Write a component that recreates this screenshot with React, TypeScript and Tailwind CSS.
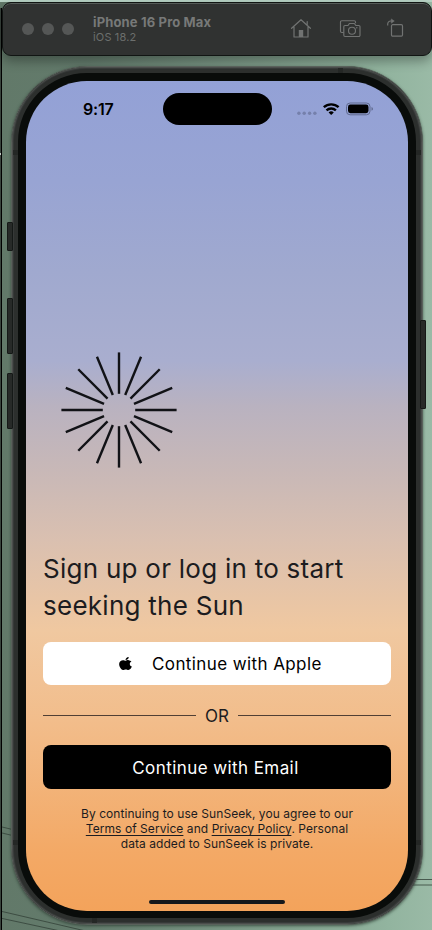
import React from "react";

const rays = Array.from({ length: 16 }, (_, i) => i * 22.5);

function SideButton({ className }: { className: string }) {
  return <span className={`absolute w-[6px] rounded-[1px] border border-[#151917] bg-[#272a28] ${className}`} />;
}

function TitleBar() {
  return (
    <header className="relative ml-[2px] flex h-[54px] w-[430px] items-center rounded-[9px] border border-[#111513] bg-[#303231] shadow-[inset_0_1px_0_#555b58,0_5px_12px_#0005]">
      <div className="ml-[19px] flex gap-[8px]">
        <i className="size-[12px] rounded-full bg-[#555756]" />
        <i className="size-[12px] rounded-full bg-[#555756]" />
        <i className="size-[12px] rounded-full bg-[#555756]" />
      </div>
      <div className="ml-[19px] w-[160px] whitespace-nowrap text-[#777978]">
        <div className="text-[13px] font-bold leading-[15px] tracking-[0.150px]">iPhone 16 Pro Max</div>
        <div className="text-[11px] leading-[14px] tracking-[0.150px] text-[#6c6f6d]">iOS 18.2</div>
      </div>
      <div className="ml-[37px] flex items-center text-[#717372]">
        <svg width="22" height="22" viewBox="0 0 22 22" fill="none" stroke="currentColor" strokeWidth="1.2" strokeLinecap="round" strokeLinejoin="round">
          <path d="M1.600 10.300 11 1.700l9.400 8.600M4 9v10h14V9M17.200 7V3.500" />
          <path d="M8.800 12h4.400v7H8.800z" fill="currentColor" stroke="none" />
        </svg>
        <svg className="ml-[27px]" width="22" height="22" viewBox="0 0 22 22" fill="none" stroke="currentColor" strokeWidth="1.150" strokeLinejoin="round">
          <path d="M4.800 14.500H2.700a1.200 1.200 0 0 1-1.200-1.200V3.900A1.200 1.200 0 0 1 2.700 2.700h12.600a1.200 1.200 0 0 1 1.200 1.200v1.300" />
          <path d="M6 7.500h3l1.400-2h5l1.400 2h3a1.200 1.200 0 0 1 1.200 1.200v8.600a1.200 1.200 0 0 1-1.200 1.200H6a1.200 1.200 0 0 1-1.200-1.200V8.700A1.200 1.200 0 0 1 6 7.500Z" />
          <circle cx="13" cy="12.700" r="3.500" />
          <circle cx="17.800" cy="9.800" r=".7" fill="currentColor" stroke="none" />
        </svg>
        <svg className="ml-[24px]" width="22" height="22" viewBox="0 0 22 22" fill="none" stroke="currentColor" strokeWidth="1.200" strokeLinejoin="round">
          <rect x="6.500" y="6.700" width="11" height="11.500" rx="1.200" />
          <path d="M2.700 7.500V6a3 3 0 0 1 3-3h2.600" />
          <path d="M6.300.9 9.300 3 6.300 5.200Z" fill="currentColor" strokeWidth=".5" />
        </svg>
      </div>
    </header>
  );
}

function StatusBar() {
  return (
    <div className="flex h-[32px] items-center text-black">
      <span className="ml-[57px] w-[79.500px] text-[16px] font-semibold leading-5 tracking-[-0.200px]">9:17</span>
      <span className="h-[32px] w-[109px] rounded-full bg-black" />
      <svg className="ml-[25px]" width="78" height="20" viewBox="0 0 78 20">
        <g fill="#7580ab">
          <circle cx="1.900" cy="14.200" r="1.700" />
          <circle cx="7.200" cy="14.200" r="1.700" />
          <circle cx="12.600" cy="14.200" r="1.700" />
          <circle cx="17.900" cy="14.200" r="1.700" />
        </g>
        <g fill="none" stroke="#000" strokeWidth="2.400">
          <path d="M26.800 8.200a11 11 0 0 1 14.800 0" />
          <path d="M29.500 11.300a7 7 0 0 1 9.400 0" />
        </g>
        <path d="m34.200 16-2.600-2.500a3.800 3.800 0 0 1 5.200 0Z" />
        <rect x="49.500" y="4" width="23.500" height="11.800" rx="3.600" fill="none" stroke="#5f698e" />
        <rect x="51" y="5.600" width="20.500" height="8.600" rx="2.400" />
        <path d="M74.500 8c2 .6 2 3.200 0 3.800Z" fill="#5f698e" />
      </svg>
    </div>
  );
}

export default function App() {
  return (
    <div className="relative h-[930px] w-[432px] overflow-hidden bg-[linear-gradient(90deg,#627969_0%,#637b6c_20%,#92b49f_90%,#9abaa6_100%)] pt-[2px] font-['Inter',sans-serif]">
      <span className="absolute left-0 top-0 h-[2px] w-full bg-[#b8d3c5]" />
      <svg className="absolute inset-0" width="432" height="930" fill="none" stroke="#344139" strokeWidth=".8">
        <path d="M0 826.500 27 833M0 832.500 27 839M0 911 90 932M0 918 65 932M405 879.500h27M405 885h27" />
      </svg>
      <span className="absolute left-0 top-[8px] h-full w-[2px] border-r border-black bg-[#39443d]" />
      <span className="absolute left-0 top-[153px] h-[2px] w-[1px] bg-[#c4c9c6]" />
      <TitleBar />
      <main className="relative ml-[11px] mt-[10px] h-[859px] w-[412px] rounded-[76px] border border-[#59615b] bg-[#090c0a] p-[14px] shadow-[inset_0_0_0_1px_#4a4d4b,inset_0_0_0_2px_#363938,inset_0_0_0_6px_#2c2f2d,0_1px_3px_#26352bb0]">
        <SideButton className="left-[-5px] top-[155px] h-[29px]" />
        <SideButton className="left-[-5px] top-[231px] h-[56px]" />
        <SideButton className="left-[-5px] top-[306px] h-[56px]" />
        <SideButton className="right-[-4px] top-[253px] h-[89px]" />
        <span className="absolute left-px top-[83px] h-[5px] w-[5px] bg-[#242725]" />
        <span className="absolute right-px top-[83px] h-[5px] w-[5px] bg-[#242725]" />
        <span className="absolute left-px top-[773px] h-[5px] w-[5px] bg-[#242725]" />
        <span className="absolute right-px top-[773px] h-[5px] w-[5px] bg-[#242725]" />
        <span className="absolute left-[326px] top-px h-[5px] w-[5px] bg-[#242725]" />
        <span className="absolute bottom-px left-[80px] h-[5px] w-[5px] bg-[#242725]" />

        <section className="flex h-[830px] w-[382px] flex-col overflow-hidden rounded-[61px] bg-[linear-gradient(180deg,#93a1d6_0px,#98a4d3_100px,#a0a9cf_190px,#a9aecf_280px,#b9b2c0_325px,#c8b8b7_390px,#dac0b0_460px,#f0c8a0_550px,#f2bd8b_640px,#f3a966_770px,#f3a35b_830px)] pt-[12px] text-[#1c1c20]">
          <StatusBar />
          <svg className="ml-[32px] mt-[224px] shrink-0" width="122" height="122" viewBox="-61 -61 122 122" stroke="#111216" strokeWidth="2.400">
            {rays.map((angle) => <line key={angle} x1="0" y1="-16.200" x2="0" y2="-57.600" transform={`rotate(${angle})`} />)}
          </svg>
          <h1 className="ml-[17px] mt-[79px] w-[340px] text-[26px] font-normal leading-[37px] tracking-[0.260px]">
            Sign up or log in to start<br />seeking the Sun
          </h1>
          <div className="ml-[17px] mt-[18px] flex w-[348px] flex-col">
            <button className="flex h-[43px] items-center rounded-[8px] bg-white pt-px text-[17px] leading-5 tracking-[0.400px] text-black">
              <svg className="-mt-px ml-[76px] mr-[20px]" width="13" height="14" viewBox="0 0 384 480" preserveAspectRatio="none">
                <path d="M318.700 236.700c-.2-36.700 16.400-64.400 50-84.800-18.800-26.900-47.200-41.700-84.700-44.600-35.500-2.800-74.300 20.700-88.500 20.700-15 0-49.400-19.700-76.400-19.700C63.300 109.200 4 153.100 4 242.500q0 39.600 14.400 81.200c12.800 36.700 59 126.700 107.200 125.200 25.200-.6 43-17.900 75.800-17.900 31.800 0 48.300 17.900 76.400 17.900 48.600-.7 90.400-82.500 102.600-119.300-65.200-30.700-61.700-90-61.700-92.900zM262.100 72.500c27.300-32.400 24.800-61.900 24-72.500-24.100 1.400-52 16.400-67.900 34.900-17.500 19.800-27.800 44.300-25.600 71.900 26.100 2 49.900-11.400 69.500-34.300z" />
              </svg>
              <span>Continue with Apple</span>
            </button>
            <div className="flex h-[60px] items-center gap-[9px] text-[17px] leading-5">
              <span className="h-px flex-1 bg-[#503f34]" /><span className="pt-px">OR</span><span className="h-px flex-1 bg-[#503f34]" />
            </div>
            <button className="h-[44px] rounded-[8px] bg-black pr-[3px] pt-px text-[17px] leading-5 tracking-[0.420px] text-white">Continue with Email</button>
            <p className="mt-[17px] text-center text-[12px] leading-[15px] tracking-[0.060px]">
              By continuing to use SunSeek, you agree to our<br />
              <a className="underline underline-offset-2">Terms of Service</a> and <a className="underline underline-offset-2">Privacy Policy</a>. Personal<br />
              data added to SunSeek is private.
            </p>
          </div>
          <span className="mb-[7px] ml-[123px] mt-auto h-[4px] w-[136px] shrink-0 rounded-full bg-[#15181b]" />
        </section>
      </main>
    </div>
  );
}
